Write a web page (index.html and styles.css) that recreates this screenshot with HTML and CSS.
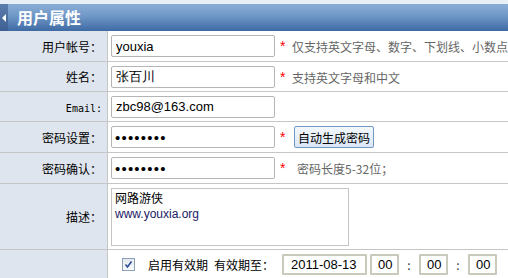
FILE: index.html
```html
<!DOCTYPE html>
<html>
<head>
<meta charset="utf-8">
<link rel="stylesheet" href="styles.css">
</head>
<body>
<div class="top-strip"></div>
<div class="title-bar">
  <div class="tab"><span class="arrow"></span></div>
  <div class="title">用户属性</div>
</div>
<table class="form">
  <tr class="r-tall">
    <th>用户帐号：</th>
    <td><input class="txt" type="text" value="youxia"><span class="req">*</span><span class="hint">仅支持英文字母、数字、下划线、小数点</span></td>
  </tr>
  <tr>
    <th>姓名：</th>
    <td><input class="txt" type="text" value="张百川"><span class="req">*</span><span class="hint">支持英文字母和中文</span></td>
  </tr>
  <tr>
    <th><span class="mono">Email:</span></th>
    <td><input class="txt" type="text" value="zbc98@163.com"></td>
  </tr>
  <tr class="r-tall">
    <th>密码设置：</th>
    <td><input class="txt pw" type="password" value="12345678"><span class="req">*</span><button class="btn">自动生成密码</button></td>
  </tr>
  <tr class="r-tall">
    <th>密码确认：</th>
    <td><input class="txt pw" type="password" value="12345678"><span class="req">*</span><span class="hint hint2">密码长度5-32位；</span></td>
  </tr>
  <tr class="desc-row">
    <th>描述：</th>
    <td><div class="area">网路游侠<br><span class="lat">www.youxia.org</span></div></td>
  </tr>
  <tr class="last-row">
    <th></th>
    <td>
      <div class="valid">
        <span class="chk"><svg width="11" height="11" viewBox="0 0 11 11"><path d="M2.5 5.5 L4.5 8 L8.5 2.5" fill="none" stroke="#2a4e9c" stroke-width="1.6"/></svg></span>
        <span class="lbl1">启用有效期</span>
        <span class="lbl2">有效期至：</span>
        <span class="box date">2011-08-13</span>
        <span class="box tm">00</span>
        <span class="sep">:</span>
        <span class="box tm">00</span>
        <span class="sep">:</span>
        <span class="box tm">00</span>
      </div>
    </td>
  </tr>
</table>
</body>
</html>
```
FILE: styles.css
```css
html, body { margin: 0; padding: 0; background: #ffffff; }
body {
  width: 508px;
  height: 278px;
  overflow: hidden;
  font-family: "Noto Sans CJK SC", "Liberation Sans", sans-serif;
  font-size: 12px;
  color: #000;
}
.top-strip { height: 4px; background: #e9eff7; }
.title-bar {
  display: flex;
  height: 27px;
  background: linear-gradient(#8aaed6, #6f97c6 45%, #3e6aa4);
}
.tab {
  width: 8px;
  background: linear-gradient(#5b7eae, #3d5f93);
  display: flex;
  align-items: center;
  justify-content: center;
}
.arrow {
  width: 0; height: 0;
  border-top: 4px solid transparent;
  border-bottom: 4px solid transparent;
  border-right: 4px solid #ffffff;
}
.title {
  color: #ffffff;
  font-weight: bold;
  font-size: 16px;
  line-height: 27px;
  padding-left: 9px;
}
.form {
  border-collapse: collapse;
  width: 100%;
}
.form th, .form td {
  border-bottom: 1px solid #c6c6c6;
  padding: 0;
  height: 29px;
}
.form .r-tall th, .form .r-tall td { height: 30px; }
.form th {
  width: 108px;
  background: #dfe5ee;
  border-right: 1px solid #c6c6c6;
  text-align: right;
  font-weight: normal;
  padding-right: 5px;
  box-sizing: border-box;
  font-size: 12px;
}
.form td { padding-left: 3px; white-space: nowrap; }
.mono { font-family: "DejaVu Sans Mono", monospace; font-size: 10px; }
.txt {
  width: 164px;
  height: 22px;
  box-sizing: border-box;
  border: 1px solid #b5b5b5;
  border-radius: 2px;
  padding: 0 4px;
  font-family: "Liberation Sans", sans-serif;
  font-size: 13px;
  vertical-align: middle;
  margin: 0;
  background: #fff;
}
.pw { font-size: 15px; letter-spacing: 1.2px; padding-left: 3px; }
.req {
  color: #ff0000;
  display: inline-block;
  width: 12px;
  margin-left: 5px;
  vertical-align: middle;
  font-family: "Liberation Sans", sans-serif;
  font-size: 14px;
}
.hint { color: #666666; vertical-align: middle; }
.hint2 { padding-left: 5px; }
.btn {
  height: 22px;
  padding: 0 3px;
  margin-left: 2px;
  border: 1px solid #7397c4;
  border-radius: 2px;
  background: linear-gradient(#f4f8fd, #dbe7f6);
  font-family: "Noto Sans CJK SC", sans-serif;
  font-size: 12px;
  vertical-align: middle;
  color: #000;
}
.desc-row th, .desc-row td { height: 65px; }
.area {
  width: 238px;
  height: 58px;
  box-sizing: border-box;
  border: 1px solid #c4c4c4;
  padding: 1px 3px;
  line-height: 15px;
  font-size: 12px;
}
.lat { font-family: "Liberation Sans", sans-serif; font-size: 12px; color: #1a1a66; }
.last-row th, .last-row td { height: 28px; border-bottom: none; }
.valid {
  display: flex;
  align-items: center;
  padding-left: 11px;
}
.chk {
  width: 11px; height: 11px;
  border: 1px solid #8ea0b8;
  background: linear-gradient(#e4e8ee, #fafbfc);
  display: inline-flex;
}
.lbl1 { margin-left: 13px; }
.lbl2 { margin-left: 6px; }
.box {
  height: 21px;
  box-sizing: border-box;
  border: 2px solid #c9c9bc;
  border-radius: 1px;
  font-family: "Liberation Sans", sans-serif;
  font-size: 13px;
  line-height: 17px;
  padding: 0 6px;
  background: #fff;
}
.date { margin-left: 8px; width: 85px; padding-left: 7px; }
.tm { width: 29px; text-align: center; margin-left: 3px; }
.sep { width: 20px; text-align: center; color: #333; }
.sep + .tm { margin-left: 0; }
```
